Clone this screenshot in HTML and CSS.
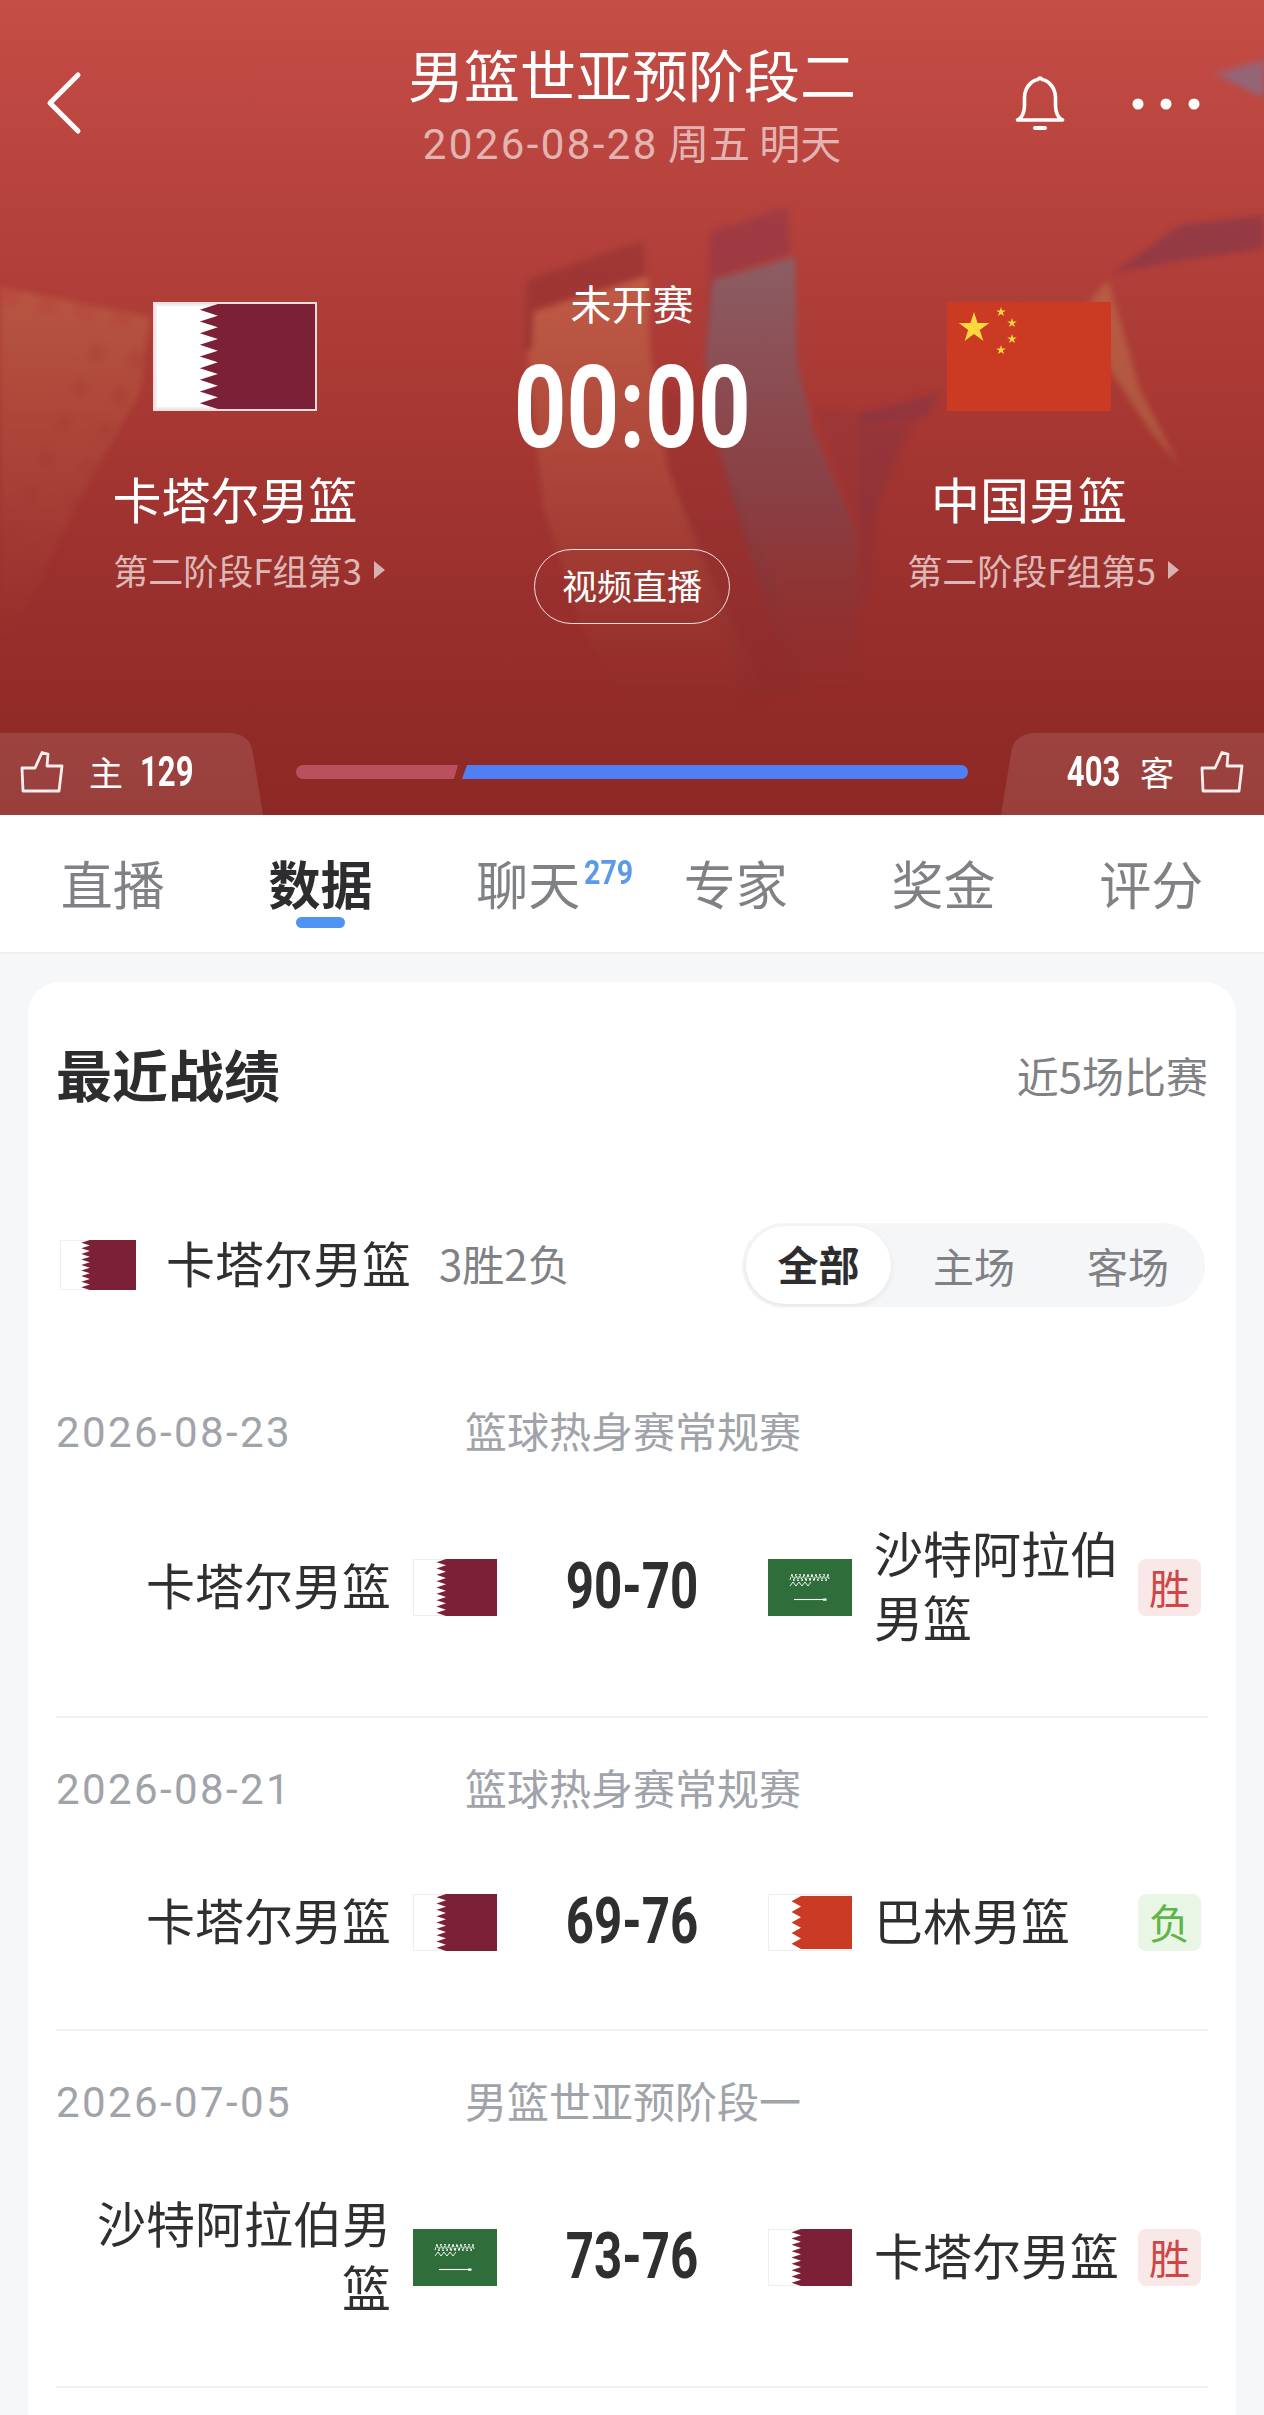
FILE: index.html
```html
<!DOCTYPE html>
<html lang="zh-CN">
<head>
<meta charset="utf-8">
<title>男篮世亚预阶段二</title>
<link rel="stylesheet" href="styles.css">
</head>
<body>
<svg class="defs" aria-hidden="true">
  <defs>
    <symbol id="qatar" viewBox="0 0 84 57" preserveAspectRatio="none">
      <rect x=".5" y=".5" width="83" height="56" fill="#fff" stroke="#eceef0"/>
      <polygon fill="#7c2037" points="84,0 33,0 23.5,3.17 33,6.33 23.5,9.5 33,12.67 23.5,15.83 33,19 23.5,22.17 33,25.33 23.5,28.5 33,31.67 23.5,34.83 33,38 23.5,41.17 33,44.33 23.5,47.5 33,50.67 23.5,53.83 33,57 84,57"/>
    </symbol>
    <symbol id="bahrain" viewBox="0 0 84 57" preserveAspectRatio="none">
      <rect x=".5" y=".5" width="83" height="56" fill="#fff" stroke="#eceef0"/>
      <polygon fill="#cb3a24" points="84,2 33,2 23.5,7.3 33,12.6 23.5,17.9 33,23.2 23.5,28.5 33,33.800 23.5,39.1 33,44.4 23.5,49.7 33,55 84,55"/>
    </symbol>
    <symbol id="saudi" viewBox="0 0 84 57" preserveAspectRatio="none">
      <rect width="84" height="57" fill="#2f6e3b"/>
      <path d="M22 21l2-6 2 7 2-7 2 7 2-7 2 7 2-7 2 7 2-7 2 7 2-7 2 7 2-7 2 7 2-7 2 7 2-7 2 7 2-7 1 5" fill="none" stroke="#fff" stroke-width="1" stroke-dasharray="3 .8"/>
      <path d="M22 27l3-4 3 4 3-4 3 4 3-4 3 4 3-4" fill="none" stroke="#fff" stroke-width=".9"/>
      <path d="M26 40.5h31" stroke="#fff" stroke-width="1.100" fill="none"/>
      <rect x="55" y="39.5" width="3.5" height="2.2" fill="#fff"/>
    </symbol>
    <symbol id="star" viewBox="-1 -1 2 2">
      <polygon fill="#fcd83f" points="0,-1 .2245,-.309 .951,-.309 .363,.118 .588,.809 0,.382 -.588,.809 -.363,.118 -.951,-.309 -.2245,-.309"/>
    </symbol>
    <symbol id="thumb" viewBox="0 0 44 44">
      <path d="M2 18H15L22 2.500L28 4L27 16H42L39 41H3Z" fill="none" stroke="currentColor" stroke-width="2.800" stroke-linejoin="round"/>
    </symbol>
    <linearGradient id="fade-tan" x1="0" y1="0" x2="0" y2="1">
      <stop offset="0" stop-color="#d8925f" stop-opacity=".36"/>
      <stop offset=".5" stop-color="#d08a60" stop-opacity=".18"/>
      <stop offset="1" stop-color="#c87a58" stop-opacity="0"/>
    </linearGradient>
    <linearGradient id="fade-gray" x1="0" y1="0" x2="0" y2="1">
      <stop offset="0" stop-color="#6f7585" stop-opacity=".58"/>
      <stop offset=".55" stop-color="#6a5060" stop-opacity=".42"/>
      <stop offset="1" stop-color="#6a3a40" stop-opacity="0"/>
    </linearGradient>
    <linearGradient id="fade-left" x1="0" y1="0" x2="0" y2="1">
      <stop offset="0" stop-color="#c98a58" stop-opacity=".32"/>
      <stop offset=".6" stop-color="#c07a55" stop-opacity=".15"/>
      <stop offset="1" stop-color="#b06a50" stop-opacity="0"/>
    </linearGradient>
  </defs>
</svg>

<section class="hero">
  <svg class="hero-art" viewBox="0 0 1264 815" preserveAspectRatio="none" aria-hidden="true">
    <g class="art-blur">
      <polygon fill="url(#fade-left)" points="0,287 150,317 140,393 83,493 33,593 0,650"/>
      <path d="M140 352L32 590M100 345L0 560" fill="none" stroke="#9c3630" stroke-opacity=".25" stroke-width="15" stroke-dasharray="17 22"/>
      <path d="M0 296L150 325" fill="none" stroke="#b5423d" stroke-opacity=".45" stroke-width="14" stroke-dasharray="20 18"/>

      <polygon fill="#7b2a30" fill-opacity=".18" points="663,390 707,387 720,450 780,600 805,690 745,700 700,570 670,470"/>
      <polygon fill="#7e2a2c" fill-opacity=".38" points="527,280 643,241 645,275 533,310 532,347 525,350"/>
      <polygon fill="url(#fade-tan)" points="533,312 648,276 650,347 667,467 707,567 767,700 620,700 580,623 543,507 527,353 532,347"/>

      <polygon fill="#7e3350" fill-opacity=".38" points="710,232 788,207 790,253 713,278 707,357"/>
      <polygon fill="url(#fade-gray)" points="713,280 795,257 797,360 813,430 857,533 858,690 800,690 763,600 720,453 705,357"/>
      <polygon fill="#7e3346" fill-opacity=".2" points="813,407 920,417 863,533"/>

      <polygon fill="#6f3350" fill-opacity=".45" points="1113,273 1180,225 1264,215 1264,248 1170,262"/>
      <polygon fill="#6f3350" fill-opacity=".35" points="860,413 940,392 927,417 860,423"/>
      <polygon fill="#6f3350" fill-opacity=".18" points="860,425 905,425 880,500 868,600 860,610"/>
      <polygon fill="#c58f5c" fill-opacity=".36" points="1090,300 1108,280 1120,320 1140,390 1180,467 1150,430 1110,370"/>
      <polygon fill="#8a6c84" fill-opacity=".8" points="1215,74 1264,60 1264,98"/>
    </g>
  </svg>

  <header class="topbar">
    <div class="topbar-left">
      <svg class="ico-back" viewBox="0 0 42 66" aria-hidden="true"><path d="M34 4L6 32L34 60" fill="none" stroke="#fff" stroke-width="5" stroke-linecap="round" stroke-linejoin="round"/></svg>
    </div>
    <div class="topbar-title">
      <div class="title">男篮世亚预阶段二</div>
      <div class="subtitle"><span class="num">2026-08-28</span> 周五 明天</div>
    </div>
    <div class="topbar-right">
      <svg class="ico-bell" viewBox="0 0 52 58" aria-hidden="true">
        <path d="M3.500 46Q10 43 10.500 32V24C10.500 13 18 6.500 24 5.500Q26 2.500 28 5.500C34 6.500 41.500 13 41.500 24V32Q42 43 48.500 46Z" fill="none" stroke="#fff" stroke-width="3.600" stroke-linejoin="round"/>
        <path d="M21 54H31" stroke="#fff" stroke-width="4" stroke-linecap="round"/>
      </svg>
      <svg class="ico-more" viewBox="0 0 68 12" aria-hidden="true">
        <circle cx="6" cy="6" r="5.500" fill="#fff"/><circle cx="34" cy="6" r="5.500" fill="#fff"/><circle cx="62" cy="6" r="5.500" fill="#fff"/>
      </svg>
    </div>
  </header>

  <div class="matchup">
    <div class="team">
      <svg class="hero-flag hero-flag-qatar"><use href="#qatar"/></svg>
      <div class="team-name">卡塔尔男篮</div>
      <div class="team-rank">第二阶段F组第3<i class="tri"></i></div>
    </div>
    <div class="status">
      <div class="status-label">未开赛</div>
      <div class="status-clock">00:00</div>
      <div class="live-btn">视频直播</div>
    </div>
    <div class="team">
      <svg class="hero-flag" viewBox="0 0 164 109">
        <rect width="164" height="109" fill="#cb3a22"/>
        <use href="#star" x="11" y="10" width="32" height="32"/>
        <use href="#star" x="49" y="5" width="10" height="10"/>
        <use href="#star" x="60" y="16" width="10" height="10"/>
        <use href="#star" x="60" y="32" width="10" height="10"/>
        <use href="#star" x="49" y="43" width="10" height="10"/>
      </svg>
      <div class="team-name">中国男篮</div>
      <div class="team-rank">第二阶段F组第5<i class="tri"></i></div>
    </div>
  </div>

  <div class="votes">
    <div class="vote vote-home">
      <svg class="ico-thumb"><use href="#thumb"/></svg>
      <span class="vote-side">主</span>
      <span class="vote-num">129</span>
    </div>
    <div class="vote-bar">
      <div class="vote-bar-home"></div>
      <div class="vote-bar-away"></div>
    </div>
    <div class="vote vote-away">
      <span class="vote-num">403</span>
      <span class="vote-side">客</span>
      <svg class="ico-thumb"><use href="#thumb"/></svg>
    </div>
  </div>
</section>

<nav class="tabs">
  <div class="tab">直播</div>
  <div class="tab tab-active">数据</div>
  <div class="tab"><span class="tab-label">聊天<sup class="tab-count">279</sup></span></div>
  <div class="tab">专家</div>
  <div class="tab">奖金</div>
  <div class="tab">评分</div>
</nav>

<main class="card">
  <div class="card-head">
    <h2 class="card-title">最近战绩</h2>
    <div class="card-note">近5场比赛</div>
  </div>

  <div class="team-row">
    <svg class="row-flag"><use href="#qatar"/></svg>
    <div class="team-row-name">卡塔尔男篮</div>
    <div class="team-row-record">3胜2负</div>
    <div class="segment">
      <div class="segment-item segment-active">全部</div>
      <div class="segment-item">主场</div>
      <div class="segment-item">客场</div>
    </div>
  </div>

  <article class="game game-first">
    <div class="game-meta"><span class="game-date">2026-08-23</span><span class="game-league">篮球热身赛常规赛</span></div>
    <div class="game-row">
      <div class="game-home">卡塔尔男篮</div>
      <svg class="game-flag"><use href="#qatar"/></svg>
      <div class="game-score"><span class="game-score-num">90-70</span></div>
      <svg class="game-flag"><use href="#saudi"/></svg>
      <div class="game-away">沙特阿拉伯男篮</div>
      <div class="result result-win">胜</div>
    </div>
  </article>

  <article class="game">
    <div class="game-meta"><span class="game-date">2026-08-21</span><span class="game-league">篮球热身赛常规赛</span></div>
    <div class="game-row">
      <div class="game-home">卡塔尔男篮</div>
      <svg class="game-flag"><use href="#qatar"/></svg>
      <div class="game-score"><span class="game-score-num">69-76</span></div>
      <svg class="game-flag"><use href="#bahrain"/></svg>
      <div class="game-away">巴林男篮</div>
      <div class="result result-lose">负</div>
    </div>
  </article>

  <article class="game">
    <div class="game-meta"><span class="game-date">2026-07-05</span><span class="game-league">男篮世亚预阶段一</span></div>
    <div class="game-row">
      <div class="game-home">沙特阿拉伯男篮</div>
      <svg class="game-flag"><use href="#saudi"/></svg>
      <div class="game-score"><span class="game-score-num">73-76</span></div>
      <svg class="game-flag"><use href="#qatar"/></svg>
      <div class="game-away">卡塔尔男篮</div>
      <div class="result result-win">胜</div>
    </div>
  </article>
</main>
</body>
</html>
```

FILE: styles.css
```css
* { box-sizing: border-box; }
html, body { margin: 0; padding: 0; }
body {
  background: #f6f7f9;
  color: #2f2f31;
  font-family: "Noto Sans CJK SC", "Noto Sans", sans-serif;
  overflow-x: hidden;
}
.defs { position: absolute; width: 0; height: 0; }

/* Hero */
.hero {
  position: relative;
  height: 815px;
  overflow: hidden;
  color: #fff;
  background: linear-gradient(180deg, #c54e46 0%, #b6423c 25%, #a83833 50%, #982f2c 75%, #8c2825 100%);
  display: flex;
  flex-direction: column;
}
.hero-art { position: absolute; left: 0; top: 0; width: 100%; height: 100%; }
.art-blur { filter: blur(3px); }

.topbar {
  position: relative;
  display: grid;
  grid-template-columns: 1fr auto 1fr;
  padding-top: 39px;
}
.topbar-left { padding: 35px 0 0 44px; }
.ico-back { display: block; width: 42px; height: 66px; margin-top: -3px; }
.topbar-title { text-align: center; }
.title { font-size: 56px; line-height: 68px; }
.subtitle { font-size: 41px; line-height: 68px; color: rgba(255, 255, 255, .62); }
.num { font-family: Roboto, sans-serif; font-size: 42px; letter-spacing: 2.400px; }
.topbar-right {
  display: flex;
  justify-content: flex-end;
  align-items: flex-start;
  gap: 66px;
  padding: 35px 64px 0 0;
}
.ico-bell { width: 52px; height: 58px; display: block; }
.ico-more { width: 68px; height: 12px; display: block; margin-top: 24px; }

.matchup {
  position: relative;
  display: grid;
  grid-template-columns: 470px 1fr 470px;
  margin-top: 98px;
}
.team { display: flex; flex-direction: column; align-items: center; padding-top: 25px; }
.hero-flag { display: block; width: 164px; height: 109px; }
.hero-flag-qatar { border: 2px solid #f6dcdc; }
.team-name { font-size: 49px; line-height: 64px; margin-top: 55px; }
.team-rank {
  display: flex;
  align-items: center;
  font-size: 35px;
  line-height: 48px;
  margin-top: 16px;
  color: rgba(255, 255, 255, .68);
  padding-left: 28px;
}
.tri {
  width: 0; height: 0;
  margin-left: 12px;
  border-left: 11px solid rgba(255, 255, 255, .62);
  border-top: 9px solid transparent;
  border-bottom: 9px solid transparent;
}
.status { display: flex; flex-direction: column; align-items: center; }
.status-label { font-size: 41px; line-height: 56px; margin-top: -3px; }
.status-clock {
  font-family: Roboto, sans-serif;
  font-weight: 700;
  font-size: 115px;
  line-height: 120px;
  margin-top: 18px;
  transform: scaleX(.8);
}
.live-btn {
  width: 196px;
  height: 75px;
  margin-top: 81px;
  border: 1.5px solid rgba(255, 255, 255, .85);
  border-radius: 38px;
  font-size: 35px;
  line-height: 70px;
  text-align: center;
}

.votes {
  position: relative;
  margin-top: auto;
  height: 82px;
  display: flex;
  align-items: stretch;
  justify-content: space-between;
}
.vote {
  width: 263px;
  background: rgba(255, 255, 255, .11);
  display: flex;
  align-items: center;
  padding-bottom: 4px;
}
.vote-home {
  padding-left: 20px;
  clip-path: path("M0 0H228Q250 0 253 20L263 82H0Z");
}
.vote-away {
  justify-content: flex-end;
  padding-right: 20px;
  clip-path: path("M35 0H263V82H0L10 20Q13 0 35 0Z");
}
.ico-thumb { width: 44px; height: 44px; display: block; color: #fbeeee; }
.vote-side { font-size: 34px; line-height: 44px; }
.vote-num {
  font-family: Roboto, sans-serif;
  font-weight: 700;
  font-size: 42px;
  line-height: 44px;
  transform: scaleX(.74);
}
.vote-home .vote-side { margin-left: 25px; }
.vote-home .vote-num { margin-left: 17px; transform-origin: left center; }
.vote-away .vote-num { transform-origin: right center; }
.vote-away .vote-side { margin: 0 26px 0 20px; }
.vote-bar {
  flex: 1;
  display: flex;
  height: 14px;
  margin: 32px 33px 0;
}
.vote-bar-home {
  width: 162px;
  background: #ba505d;
  border-radius: 7px 0 0 7px;
  clip-path: polygon(0 0, 100% 0, 97.500% 100%, 0 100%);
}
.vote-bar-away {
  flex: 1;
  margin-left: 4px;
  background: #4f7ff2;
  border-radius: 0 7px 7px 0;
  clip-path: polygon(5px 0, 100% 0, 100% 100%, 0 100%);
}

/* Tabs */
.tabs {
  display: grid;
  grid-template-columns: repeat(6, 1fr);
  padding: 0 9px;
  height: 139px;
  background: #fff;
  border-bottom: 2px solid #eff0f2;
}
.tab {
  position: relative;
  display: flex;
  justify-content: center;
  font-size: 52px;
  line-height: 136px;
  color: #7f8184;
}
.tab-active { color: #2d2d2f; font-weight: 700; }
.tab-active::after {
  content: "";
  position: absolute;
  left: 50%;
  bottom: 24px;
  width: 49px;
  height: 11px;
  margin-left: -24px;
  border-radius: 6px;
  background: #4f94f0;
}
.tab-label { position: relative; }
.tab-count {
  position: absolute;
  left: 108px;
  top: 43px;
  font-family: Roboto, sans-serif;
  font-weight: 700;
  font-size: 34px;
  line-height: 28px;
  color: #5b9ae8;
  vertical-align: baseline;
  transform: scaleX(.84);
  transform-origin: left center;
}

/* Card */
.card {
  margin: 28px 28px 0;
  padding: 0 28px 27px;
  background: #fff;
  border-radius: 32px 32px 0 0;
}
.card-head {
  display: flex;
  justify-content: space-between;
  align-items: center;
  padding-top: 56px;
  padding-bottom: 4px;
}
.card-title { margin: 0; font-size: 56px; line-height: 70px; font-weight: 700; color: #2d2d2f; }
.card-note { font-size: 42px; line-height: 70px; color: #7f8184; margin: 2px 0 -2px; }

.team-row {
  display: flex;
  align-items: center;
  height: 84px;
  margin-top: 111px;
}
.row-flag { display: block; width: 76px; height: 50px; margin-left: 4px; }
.team-row-name { font-size: 49px; line-height: 58px; margin-left: 30px; padding-bottom: 6px; }
.team-row-record { font-size: 42px; line-height: 58px; margin-left: 28px; color: #7f8184; padding-bottom: 4px; }
.segment {
  display: flex;
  align-items: center;
  width: 463px;
  height: 84px;
  margin-left: auto;
  margin-right: 3px;
  padding: 0 0 0 4px;
  border-radius: 42px;
  background: #f5f6f8;
}
.segment-item {
  flex: 1;
  text-align: center;
  font-size: 41px;
  line-height: 74px;
  color: #7f8184;
}
.segment-active + .segment-item { padding-left: 6px; }
.segment-active {
  flex: none;
  width: 145px;
  height: 78px;
  border-radius: 39px;
  background: #fff;
  color: #2d2d2f;
  font-weight: 700;
  box-shadow: 0 2px 6px rgba(0, 0, 0, .07);
}

.game { padding: 41px 0 65px; border-bottom: 2px solid #eff0f2; }
.game-first { padding-top: 95px; }
.game-meta {
  display: flex;
  align-items: center;
  height: 60px;
  font-size: 42px;
  color: #a0a3a9;
}
.game-date { width: 409px; font-family: Roboto, sans-serif; letter-spacing: 2.400px; }
.game-league { transform: translateY(-3px); }
.game-row {
  display: flex;
  align-items: center;
  min-height: 84px;
  margin-top: 61px;
  font-size: 49px;
  line-height: 64px;
}
.game-home { width: 335px; flex: none; text-align: right; transform: translateY(-3px); }
.game-flag { display: block; flex: none; width: 84px; height: 57px; }
.game-home + .game-flag { margin-left: 22px; }
.game-score { flex: 1; text-align: center; }
.game-score-num {
  display: inline-block;
  font-family: Roboto, sans-serif;
  font-weight: 700;
  font-size: 64px;
  line-height: 64px;
  transform: scaleX(.77);
}
.game-away { width: 248px; flex: none; margin-left: 22px; transform: translateY(-3px); }
.result {
  flex: none;
  width: 63px;
  height: 57px;
  margin: 0 7px 0 16px;
  border-radius: 8px;
  font-size: 41px;
  line-height: 54px;
  text-align: center;
}
.result-win { background: #f9e8e8; color: #d04646; }
.result-lose { background: #e9f6e6; color: #5fb44a; }
```
